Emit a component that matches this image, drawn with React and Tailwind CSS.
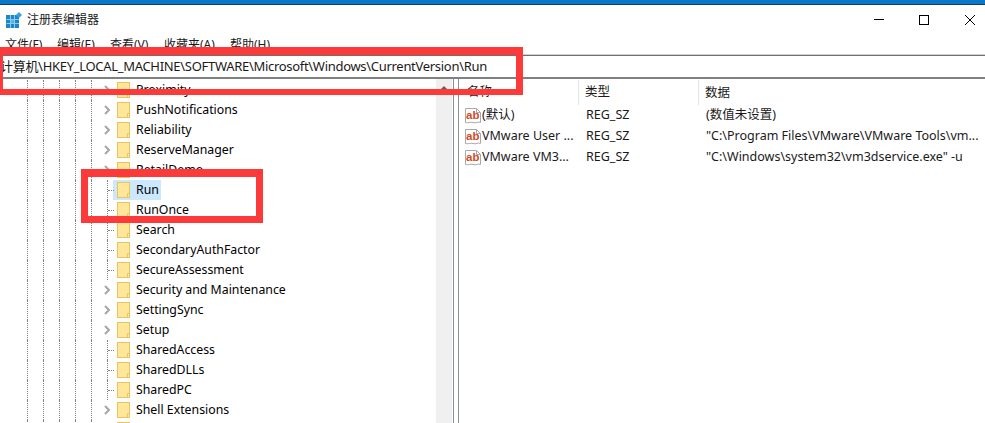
const treeItems = [
  { name: "Proximity", arrow: true },
  { name: "PushNotifications", arrow: true },
  { name: "Reliability", arrow: true },
  { name: "ReserveManager", arrow: true },
  { name: "RetailDemo", arrow: true },
  { name: "Run", selected: true },
  { name: "RunOnce" },
  { name: "Search" },
  { name: "SecondaryAuthFactor" },
  { name: "SecureAssessment" },
  { name: "Security and Maintenance", arrow: true },
  { name: "SettingSync", arrow: true },
  { name: "Setup", arrow: true },
  { name: "SharedAccess" },
  { name: "SharedDLLs" },
  { name: "SharedPC" },
  { name: "Shell Extensions", arrow: true },
  { name: "", arrow: true },
];

const values = [
  { name: "(默认)", type: "REG_SZ", data: "(数值未设置)" },
  { name: "VMware User ...", type: "REG_SZ", data: '"C:\\Program Files\\VMware\\VMware Tools\\vm...' },
  { name: "VMware VM3...", type: "REG_SZ", data: '"C:\\Windows\\system32\\vm3dservice.exe" -u' },
];

const menus = [
  { label: "文件(F)", width: "w-[52px]" },
  { label: "编辑(E)", width: "w-[53px]" },
  { label: "查看(V)", width: "w-[54px]" },
  { label: "收藏夹(A)", width: "w-[66px]" },
  { label: "帮助(H)", width: "w-[44px]" },
];

const AppIcon = () => (
  <svg width="16" height="16" viewBox="0 0 16 16" className="shrink-0">
    <rect x="0" y="3" width="13" height="13" fill="#1b87c9" />
    <path d="M0.5 7.5H13M0.5 11.5H13M4.5 3V16M8.5 3V16" stroke="#8ccbec" strokeWidth="1" />
    <rect x="5" y="8" width="3" height="3" fill="#5cb2e2" />
    <path d="M13 0L16 3L13 6L10 3Z" fill="#3d9fd8" />
  </svg>
);

const FolderIcon = () => (
  <svg width="13" height="16" viewBox="0 0 13 16" className="shrink-0">
    <rect x="0.5" y="0.5" width="12" height="15" fill="#fee79a" stroke="#ecc558" />
    <path d="M10.5 15V11.5H12.5" fill="none" stroke="#ecc558" />
  </svg>
);

const Chevron = () => (
  <svg width="7" height="10" viewBox="0 0 7 10" className="absolute left-[-3px] top-[5px]">
    <path d="M1 1L5 5L1 9" fill="none" stroke="#a6a6a6" strokeWidth="2" />
  </svg>
);

const StringIcon = () => (
  <svg width="16" height="16" viewBox="0 0 16 16" className="shrink-0">
    <path
      d="M0.5 0.5H11.5L15.5 4.5V14.5C13 13 11 15.8 8 14.5C5.5 13.5 3 15.5 0.5 14.5Z"
      fill="#ffffff"
      stroke="#a9a9a9"
    />
    <path d="M11.5 0.5V4.5H15.5" fill="none" stroke="#a9a9a9" />
    <text x="1" y="10.5" fontSize="11.5" fontWeight="700" fill="#d24a26" fontFamily="'Liberation Sans', sans-serif">
      ab
    </text>
  </svg>
);

const TreeRow = ({ name, arrow, selected }) => (
  <div className="flex h-[20px] pl-[27px]">
    {[0, 1, 2, 3, 4].map((i) => (
      <div key={i} className="w-[16px] h-full border-l border-dotted border-[#808080]" />
    ))}
    <div className={`relative w-[6px] h-full ${arrow ? "" : "border-l border-dotted border-[#808080]"}`}>
      {arrow ? <Chevron /> : <div className="mt-[10px] w-[6px] border-t border-dotted border-[#808080]" />}
    </div>
    <div className={`flex items-center h-[20px] pl-[4px] pr-[2px] gap-[6px] ${selected ? "bg-[#cce8ff]" : ""}`}>
      <FolderIcon />
      <span className="text-[12.3px] leading-[20px] text-black whitespace-nowrap">{name}</span>
    </div>
  </div>
);

export default function App() {
  return (
    <div className="relative w-[985px] h-[423px] overflow-hidden bg-white font-['Noto_Sans','Noto_Sans_CJK_SC',sans-serif] text-black">
      {/* title bar */}
      <div className="h-[5px] bg-[#0a78c8] border-b border-[#0c3f68]" />
      <div className="flex items-center h-[31px] pb-[2px] pl-[6px] pr-[10px]">
        <AppIcon />
        <span className="ml-[5px] text-[12px] leading-[16px] text-[#1a1a1a]">注册表编辑器</span>
        <div className="flex items-center ml-auto">
          <div className="w-[10px] border-t border-black" />
          <div className="w-[10px] h-[10px] ml-[35px] border border-black" />
          <svg width="10" height="10" viewBox="0 0 10 10" className="ml-[36px]">
            <path d="M0 0L10 10M10 0L0 10" stroke="#000" strokeWidth="1" />
          </svg>
        </div>
      </div>

      {/* menu bar */}
      <div className="flex items-center h-[19px] pl-[5px] border-b border-[#d0d0d0] text-[12px] leading-[16px] text-[#1a1a1a]">
        {menus.map((m) => (
          <span key={m.label} className={`${m.width} shrink-0 whitespace-nowrap`}>
            {m.label}
          </span>
        ))}
      </div>

      {/* address bar */}
      <div className="flex items-center h-[24px] border-t border-b-2 border-t-[#707070] border-b-[#808080] text-[13px] tracking-[-0.3px] whitespace-nowrap text-[#1a1a1a]">
        <span>计算机\HKEY_LOCAL_MACHINE\SOFTWARE\Microsoft\Windows\CurrentVersion\Run</span>
      </div>

      <div className="flex h-[344px]">
        {/* key tree */}
        <div className="w-[436px] shrink-0 overflow-hidden pt-[1px]">
          {treeItems.map((item, i) => (
            <TreeRow key={i} {...item} />
          ))}
        </div>
        <div className="w-[16px] shrink-0 bg-[#f0f0f0] pt-[7px] pl-[4px]">
          <div className="w-0 h-0 border-l-[4px] border-r-[4px] border-b-[4px] border-l-transparent border-r-transparent border-b-[#606060]" />
        </div>
        <div className="w-[1px] shrink-0" />
        <div className="w-[6px] shrink-0 border-l border-r border-[#8a8f94]" />

        {/* value list */}
        <div className="flex-1 pt-[1px] text-[12.5px] text-[#1a1a1a]">
          <div className="flex h-[25px] items-center">
            <div className="w-[120px] h-full pl-[8px] border-r border-[#e5e5e5] leading-[24px]">名称</div>
            <div className="w-[120px] h-full pl-[6px] border-r border-[#e5e5e5] leading-[24px]">类型</div>
            <div className="pl-[6px] leading-[24px]">数据</div>
          </div>
          {values.map((v) => (
            <div key={v.name} className="flex items-center h-[21px] whitespace-nowrap">
              <div className="flex items-center w-[120px] pl-[6px] gap-[1px]">
                <StringIcon />
                <span>{v.name}</span>
              </div>
              <div className="w-[120px] pl-[7px]">{v.type}</div>
              <div className="pl-[7px]">{v.data}</div>
            </div>
          ))}
        </div>
      </div>

      {/* red annotation boxes */}
      <div className="absolute left-0 top-[47px] w-[523px] h-[48px] border-l-[3px] border-t-[8px] border-r-[7px] border-b-[6px] border-[#fd3a3a]" />
      <div className="absolute left-[81px] top-[169px] w-[182px] h-[54px] border-l-[7px] border-t-[8px] border-r-[7px] border-b-[7px] border-[#fd3a3a]" />
    </div>
  );
}
